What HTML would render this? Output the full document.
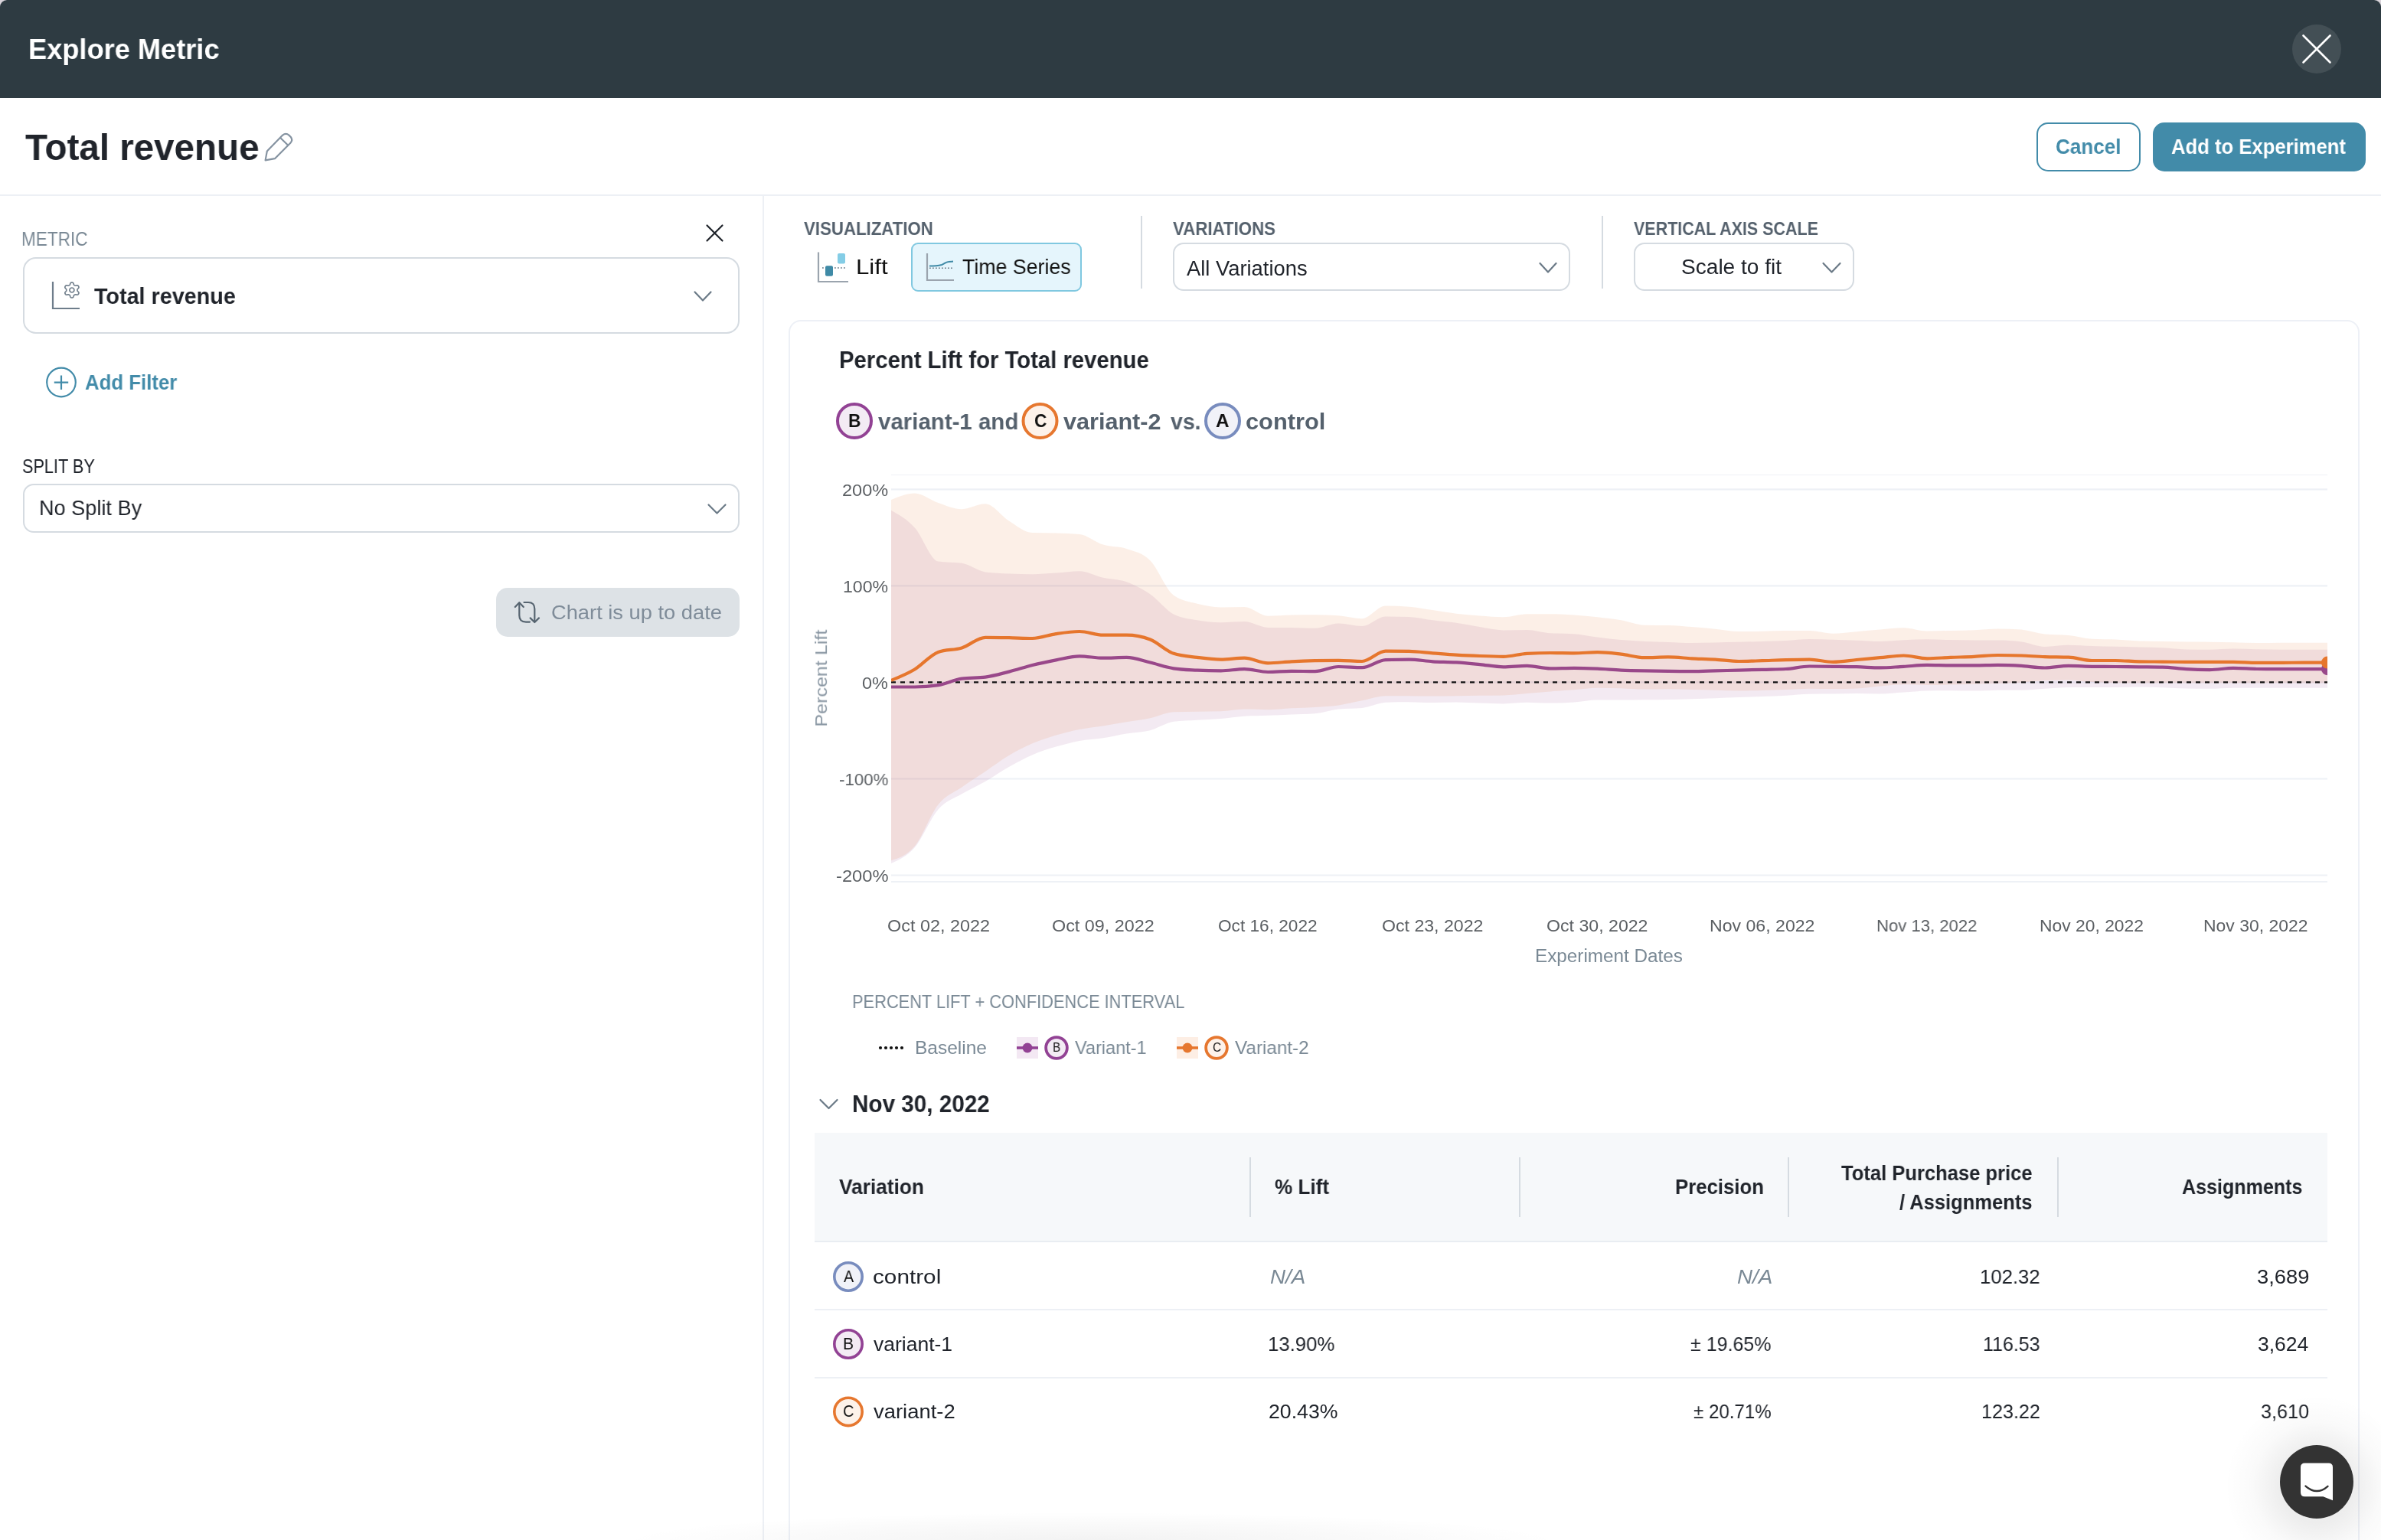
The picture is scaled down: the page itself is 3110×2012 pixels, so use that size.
<!DOCTYPE html>
<html><head><meta charset="utf-8"><title>Explore Metric</title>
<style>
html,body{margin:0;padding:0;}
html{background:#d9d3da;}
body{width:3110px;height:2012px;position:relative;overflow:hidden;font-family:"Liberation Sans",sans-serif;}
#app{position:absolute;left:0;top:0;width:3110px;height:2012px;background:#fff;border-radius:9px 9px 0 0;overflow:hidden;}
.abs{position:absolute;}
.t{position:absolute;white-space:pre;line-height:1;transform-origin:0 0;will-change:transform;}
#hdr{left:0;top:0;width:3110px;height:128px;background:#2e3b42;}
.box{position:absolute;box-sizing:border-box;border:2px solid #d5dbe1;background:#fff;}
</style></head>
<body><div id="app">
<div id="hdr" class="abs"></div>
<!-- buttons -->
<div class="box" style="left:2660px;top:160px;width:136px;height:64px;border:2.5px solid #428ba9;border-radius:15px;"></div>
<div class="abs" style="left:2812px;top:160px;width:278px;height:64px;background:#428ba9;border-radius:15px;"></div>
<!-- separators -->
<div class="abs" style="left:0;top:254px;width:3110px;height:2px;background:#edf0f5;"></div>
<div class="abs" style="left:996px;top:256px;width:2px;height:1760px;background:#edf0f5;"></div>
<!-- sidebar boxes -->
<div class="box" style="left:30px;top:336px;width:936px;height:100px;border-radius:17px;"></div>
<div class="box" style="left:30px;top:632px;width:936px;height:64px;border-radius:14px;"></div>
<div class="abs" style="left:648px;top:768px;width:318px;height:64px;background:#dde2e6;border-radius:15px;"></div>
<!-- toolbar -->
<div class="box" style="left:1190px;top:317px;width:223px;height:64px;border-color:#80c8e0;background:#e5f5fc;border-radius:9px;"></div>
<div class="abs" style="left:1490px;top:282px;width:2px;height:95px;background:#d5dbe1;"></div>
<div class="abs" style="left:2092px;top:282px;width:2px;height:95px;background:#d5dbe1;"></div>
<div class="box" style="left:1532px;top:317px;width:519px;height:63px;border-radius:14px;"></div>
<div class="box" style="left:2134px;top:317px;width:288px;height:63px;border-radius:14px;"></div>
<!-- card -->
<div class="box" style="left:1030px;top:418px;width:2052px;height:1700px;border-color:#edf0f6;border-radius:16px;"></div>
<!-- table -->
<div class="abs" style="left:1064px;top:1480px;width:1976px;height:142px;background:#f6f8fa;"></div>
<div class="abs" style="left:1064px;top:1621px;width:1976px;height:2px;background:#e9edf2;"></div>
<div class="abs" style="left:1064px;top:1710px;width:1976px;height:2px;background:#edf0f5;"></div>
<div class="abs" style="left:1064px;top:1798.5px;width:1976px;height:2px;background:#edf0f5;"></div>
<div class="abs" style="left:1632px;top:1512px;width:2px;height:78px;background:#d5dbe1;"></div>
<div class="abs" style="left:1984px;top:1512px;width:2px;height:78px;background:#d5dbe1;"></div>
<div class="abs" style="left:2335px;top:1512px;width:2px;height:78px;background:#d5dbe1;"></div>
<div class="abs" style="left:2687px;top:1512px;width:2px;height:78px;background:#d5dbe1;"></div>
<!-- bottom shadow -->
<div class="abs" style="left:800px;top:1975px;width:1250px;height:80px;border-radius:50%;background:radial-gradient(ellipse at center, rgba(0,0,0,0.05) 0%, rgba(0,0,0,0.02) 45%, rgba(0,0,0,0) 70%);"></div>
<svg class="abs" style="left:0;top:0" width="3110" height="2012" viewBox="0 0 3110 2012">
<defs><clipPath id="plot"><rect x="1164" y="600" width="1876" height="560"/></clipPath></defs>
<line x1="1164" x2="3040" y1="620.5" y2="620.5" stroke="#eef1f6" stroke-width="1.2"/>
<line x1="1164" x2="3040" y1="639.3" y2="639.3" stroke="#eef1f6" stroke-width="2.2"/>
<line x1="1164" x2="3040" y1="765.4" y2="765.4" stroke="#eef1f6" stroke-width="2.2"/>
<line x1="1164" x2="3040" y1="891.4" y2="891.4" stroke="#eef1f6" stroke-width="2.2"/>
<line x1="1164" x2="3040" y1="1017.5" y2="1017.5" stroke="#eef1f6" stroke-width="2.2"/>
<line x1="1164" x2="3040" y1="1143.5" y2="1143.5" stroke="#eef1f6" stroke-width="2.2"/>
<line x1="1164" x2="3040" y1="1152.0" y2="1152.0" stroke="#eef1f6" stroke-width="2.2"/>
<g clip-path="url(#plot)">
<path d="M1164.0,666.8C1174.3,672.5 1184.5,678.3 1194.8,689.4C1205.0,700.5 1215.3,731.9 1225.5,733.4C1235.8,735.0 1246.0,734.2 1256.3,735.8C1266.5,737.3 1276.8,746.1 1287.0,747.4C1297.3,748.7 1307.5,748.9 1317.8,749.4C1328.0,749.8 1338.3,750.2 1348.5,750.2C1358.8,750.2 1369.0,749.3 1379.3,748.6C1389.5,748.0 1399.8,746.3 1410.0,746.3C1420.3,746.3 1430.5,752.5 1440.8,754.8C1451.0,757.2 1461.3,756.7 1471.5,760.3C1481.8,763.9 1492.0,769.3 1502.3,776.3C1512.5,783.3 1522.8,797.2 1533.0,802.4C1543.3,807.6 1553.6,808.4 1563.8,810.2C1574.1,812.0 1584.3,813.3 1594.6,813.3C1604.8,813.3 1615.1,812.1 1625.3,812.1C1635.6,812.1 1645.8,819.9 1656.1,819.9C1666.3,819.9 1676.6,819.9 1686.8,819.9C1697.1,819.9 1707.3,820.7 1717.6,820.7C1727.8,820.7 1738.1,814.5 1748.3,814.5C1758.6,814.5 1768.8,818.0 1779.1,818.0C1789.3,818.0 1799.6,805.4 1809.8,805.4C1820.1,805.4 1830.3,805.6 1840.6,805.9C1850.8,806.2 1861.1,809.0 1871.3,810.3C1881.6,811.6 1891.8,812.3 1902.1,813.8C1912.3,815.2 1922.6,817.5 1932.9,819.1C1943.1,820.8 1953.4,823.4 1963.6,823.4C1973.9,823.4 1984.1,822.9 1994.4,822.9C2004.6,822.9 2014.9,826.5 2025.1,827.2C2035.4,827.9 2045.6,827.6 2055.9,828.3C2066.1,829.0 2076.4,831.3 2086.6,832.6C2096.9,833.9 2107.1,835.2 2117.4,836.1C2127.6,837.0 2137.9,837.5 2148.1,838.0C2158.4,838.4 2168.6,838.7 2178.9,839.0C2189.1,839.4 2199.4,840.1 2209.6,840.1C2219.9,840.1 2230.1,839.8 2240.4,839.6C2250.6,839.3 2260.9,839.0 2271.1,838.8C2281.4,838.5 2291.7,838.3 2301.9,838.0C2312.2,837.6 2322.4,837.4 2332.7,836.9C2342.9,836.4 2353.2,835.0 2363.4,835.0C2373.7,835.0 2383.9,835.5 2394.2,835.8C2404.4,836.1 2414.7,836.4 2424.9,836.7C2435.2,837.1 2445.4,838.0 2455.7,838.0C2465.9,838.0 2476.2,836.8 2486.4,836.3C2496.7,835.9 2506.9,835.3 2517.2,835.3C2527.4,835.3 2537.7,835.9 2547.9,836.1C2558.2,836.3 2568.4,836.6 2578.7,836.6C2588.9,836.6 2599.2,836.6 2609.4,836.6C2619.7,836.6 2629.9,837.2 2640.2,838.5C2650.4,839.7 2660.7,844.9 2671.0,844.9C2681.2,844.9 2691.5,842.8 2701.7,842.8C2712.0,842.8 2722.2,843.8 2732.5,844.1C2742.7,844.5 2753.0,844.5 2763.2,844.7C2773.5,844.9 2783.7,845.2 2794.0,845.5C2804.2,845.8 2814.5,845.8 2824.7,846.3C2835.0,846.8 2845.2,848.3 2855.5,848.4C2865.7,848.6 2876.0,848.7 2886.2,848.7C2896.5,848.7 2906.7,847.6 2917.0,847.6C2927.2,847.6 2937.5,848.0 2947.7,848.2C2958.0,848.4 2968.2,848.7 2978.5,848.7C2988.7,848.7 2999.0,848.7 3009.2,848.7C3019.5,848.7 3029.7,848.7 3040.0,848.7L3040.0,898.7C3029.7,898.7 3019.5,898.7 3009.2,898.7C2999.0,898.7 2988.7,898.7 2978.5,898.7C2968.2,898.7 2958.0,898.7 2947.7,898.7C2937.5,898.7 2927.2,898.7 2917.0,898.7C2906.7,898.7 2896.5,899.8 2886.2,899.8C2876.0,899.8 2865.7,899.7 2855.5,899.5C2845.2,899.3 2835.0,898.5 2824.7,898.2C2814.5,897.9 2804.2,897.6 2794.0,897.6C2783.7,897.6 2773.5,897.9 2763.2,897.9C2753.0,897.9 2742.7,897.9 2732.5,897.9C2722.2,897.9 2712.0,897.9 2701.7,897.9C2691.5,897.9 2681.2,899.2 2671.0,899.8C2660.7,900.4 2650.4,901.7 2640.2,901.7C2629.9,901.7 2619.7,901.7 2609.4,901.7C2599.2,901.7 2588.9,902.5 2578.7,902.5C2568.4,902.5 2558.2,902.2 2547.9,902.2C2537.7,902.2 2527.4,902.3 2517.2,902.5C2506.9,902.7 2496.7,904.0 2486.4,904.6C2476.2,905.3 2465.9,906.5 2455.7,906.5C2445.4,906.5 2435.2,906.0 2424.9,906.0C2414.7,906.0 2404.4,906.4 2394.2,906.5C2383.9,906.6 2373.7,906.6 2363.4,906.8C2353.2,907.0 2342.9,908.1 2332.7,908.7C2322.4,909.2 2312.2,909.6 2301.9,910.0C2291.7,910.4 2281.4,910.7 2271.1,911.1C2260.9,911.4 2250.6,911.8 2240.4,912.2C2230.1,912.5 2219.9,912.9 2209.6,913.2C2199.4,913.5 2189.1,913.9 2178.9,914.0C2168.6,914.2 2158.4,914.2 2148.1,914.3C2137.9,914.4 2127.6,914.6 2117.4,914.6C2107.1,914.6 2096.9,914.6 2086.6,914.6C2076.4,914.6 2066.1,916.9 2055.9,917.5C2045.6,918.2 2035.4,918.6 2025.1,918.6C2014.9,918.6 2004.6,917.8 1994.4,917.8C1984.1,917.8 1973.9,919.4 1963.6,919.4C1953.4,919.4 1943.1,918.9 1932.9,918.6C1922.6,918.3 1912.3,917.5 1902.1,917.5C1891.8,917.5 1881.6,918.1 1871.3,918.1C1861.1,918.1 1850.8,917.3 1840.6,917.3C1830.3,917.3 1820.1,917.4 1809.8,917.8C1799.6,918.2 1789.3,924.0 1779.1,925.0C1768.8,926.0 1758.6,925.5 1748.3,926.5C1738.1,927.4 1727.8,931.4 1717.6,932.3C1707.3,933.1 1697.1,933.1 1686.8,933.5C1676.6,933.9 1666.3,934.4 1656.1,934.8C1645.8,935.2 1635.6,935.1 1625.3,935.8C1615.1,936.5 1604.8,938.2 1594.6,939.1C1584.3,939.9 1574.1,940.2 1563.8,940.8C1553.6,941.5 1543.3,941.5 1533.0,942.8C1522.8,944.2 1512.5,951.6 1502.3,954.2C1492.0,956.8 1481.8,956.8 1471.5,958.5C1461.3,960.1 1451.0,962.7 1440.8,964.3C1430.5,965.9 1420.3,966.2 1410.0,968.0C1399.8,969.9 1389.5,972.6 1379.3,975.6C1369.0,978.6 1358.8,981.8 1348.5,986.2C1338.3,990.6 1328.0,996.3 1317.8,1002.1C1307.5,1007.9 1297.3,1015.1 1287.0,1021.0C1276.8,1026.8 1266.5,1031.3 1256.3,1037.3C1246.0,1043.4 1235.8,1045.9 1225.5,1057.5C1215.3,1069.1 1205.0,1095.4 1194.8,1107.2C1184.5,1118.9 1174.3,1123.4 1164.0,1127.9Z" fill="#99488a" fill-opacity="0.112"/>
<path d="M1164.0,653.1C1174.3,648.8 1184.5,644.6 1194.8,644.6C1205.0,644.6 1215.3,653.6 1225.5,657.0C1235.8,660.5 1246.0,665.2 1256.3,665.2C1266.5,665.2 1276.8,658.2 1287.0,658.2C1297.3,658.2 1307.5,674.1 1317.8,680.4C1328.0,686.7 1338.3,695.7 1348.5,696.0C1358.8,696.3 1369.0,696.1 1379.3,696.4C1389.5,696.7 1399.8,696.9 1410.0,698.0C1420.3,699.0 1430.5,708.4 1440.8,711.6C1451.0,714.8 1461.3,713.6 1471.5,717.0C1481.8,720.5 1492.0,722.1 1502.3,732.2C1512.5,742.4 1522.8,770.6 1533.0,777.8C1543.3,785.1 1553.6,786.2 1563.8,788.8C1574.1,791.4 1584.3,793.4 1594.6,793.4C1604.8,793.4 1615.1,793.0 1625.3,793.0C1635.6,793.0 1645.8,804.7 1656.1,804.7C1666.3,804.7 1676.6,803.8 1686.8,803.6C1697.1,803.3 1707.3,803.2 1717.6,803.2C1727.8,803.2 1738.1,803.6 1748.3,804.3C1758.6,805.1 1768.8,808.2 1779.1,808.2C1789.3,808.2 1799.6,791.6 1809.8,791.6C1820.1,791.6 1830.3,792.0 1840.6,792.7C1850.8,793.5 1861.1,795.6 1871.3,797.1C1881.6,798.6 1891.8,800.5 1902.1,801.7C1912.3,802.9 1922.6,803.6 1932.9,804.4C1943.1,805.1 1953.4,806.2 1963.6,806.2C1973.9,806.2 1984.1,802.2 1994.4,802.2C2004.6,802.2 2014.9,802.2 2025.1,802.2C2035.4,802.2 2045.6,802.9 2055.9,803.5C2066.1,804.2 2076.4,805.1 2086.6,806.2C2096.9,807.4 2107.1,808.5 2117.4,810.3C2127.6,812.0 2137.9,816.5 2148.1,816.7C2158.4,816.9 2168.6,816.8 2178.9,817.0C2189.1,817.2 2199.4,818.3 2209.6,819.1C2219.9,819.9 2230.1,820.8 2240.4,821.8C2250.6,822.8 2260.9,825.1 2271.1,825.1C2281.4,825.1 2291.7,825.0 2301.9,824.8C2312.2,824.6 2322.4,824.0 2332.7,824.0C2342.9,824.0 2353.2,824.0 2363.4,824.0C2373.7,824.0 2383.9,827.7 2394.2,827.7C2404.4,827.7 2414.7,826.1 2424.9,825.2C2435.2,824.3 2445.4,823.2 2455.7,822.4C2465.9,821.5 2476.2,820.2 2486.4,820.2C2496.7,820.2 2506.9,824.5 2517.2,824.5C2527.4,824.5 2537.7,824.2 2547.9,824.0C2558.2,823.8 2568.4,823.6 2578.7,823.2C2588.9,822.8 2599.2,821.6 2609.4,821.6C2619.7,821.6 2629.9,821.9 2640.2,822.6C2650.4,823.4 2660.7,827.7 2671.0,828.5C2681.2,829.4 2691.5,829.0 2701.7,829.9C2712.0,830.8 2722.2,834.2 2732.5,834.7C2742.7,835.3 2753.0,835.1 2763.2,835.5C2773.5,836.0 2783.7,837.1 2794.0,837.4C2804.2,837.8 2814.5,837.8 2824.7,838.0C2835.0,838.1 2845.2,838.4 2855.5,838.5C2865.7,838.6 2876.0,838.6 2886.2,838.8C2896.5,838.9 2906.7,839.1 2917.0,839.3C2927.2,839.5 2937.5,840.1 2947.7,840.1C2958.0,840.1 2968.2,839.8 2978.5,839.8C2988.7,839.8 2999.0,839.8 3009.2,839.8C3019.5,839.8 3029.7,839.8 3040.0,839.8L3040.0,892.2C3029.7,892.2 3019.5,892.2 3009.2,892.2C2999.0,892.2 2988.7,892.2 2978.5,892.2C2968.2,892.2 2958.0,892.2 2947.7,892.2C2937.5,892.2 2927.2,892.2 2917.0,892.2C2906.7,892.2 2896.5,892.2 2886.2,892.2C2876.0,892.2 2865.7,892.2 2855.5,892.2C2845.2,892.2 2835.0,892.2 2824.7,892.2C2814.5,892.2 2804.2,892.2 2794.0,892.2C2783.7,892.2 2773.5,892.2 2763.2,892.2C2753.0,892.2 2742.7,891.7 2732.5,891.1C2722.2,890.5 2712.0,888.4 2701.7,888.4C2691.5,888.4 2681.2,888.6 2671.0,889.1C2660.7,889.6 2650.4,891.1 2640.2,891.8C2629.9,892.5 2619.7,892.8 2609.4,893.1C2599.2,893.4 2588.9,893.5 2578.7,893.8C2568.4,894.0 2558.2,894.4 2547.9,894.6C2537.7,894.8 2527.4,894.9 2517.2,894.9C2506.9,894.9 2496.7,894.2 2486.4,894.2C2476.2,894.2 2465.9,895.6 2455.7,896.5C2445.4,897.4 2435.2,899.1 2424.9,899.5C2414.7,899.9 2404.4,900.1 2394.2,900.1C2383.9,900.1 2373.7,899.8 2363.4,899.8C2353.2,899.8 2342.9,900.8 2332.7,901.1C2322.4,901.5 2312.2,901.7 2301.9,901.9C2291.7,902.2 2281.4,902.5 2271.1,902.5C2260.9,902.5 2250.6,901.9 2240.4,901.7C2230.1,901.4 2219.9,901.4 2209.6,901.1C2199.4,900.9 2189.1,900.3 2178.9,900.3C2168.6,900.3 2158.4,900.6 2148.1,900.6C2137.9,900.6 2127.6,899.6 2117.4,899.2C2107.1,898.9 2096.9,898.7 2086.6,898.7C2076.4,898.7 2066.1,900.5 2055.9,901.3C2045.6,902.1 2035.4,902.6 2025.1,903.4C2014.9,904.2 2004.6,905.1 1994.4,906.0C1984.1,906.8 1973.9,908.2 1963.6,908.4C1953.4,908.6 1943.1,908.5 1932.9,908.7C1922.6,908.8 1912.3,909.1 1902.1,909.2C1891.8,909.3 1881.6,909.5 1871.3,909.5C1861.1,909.5 1850.8,909.2 1840.6,909.2C1830.3,909.2 1820.1,909.2 1809.8,909.2C1799.6,909.2 1789.3,913.3 1779.1,915.3C1768.8,917.3 1758.6,920.0 1748.3,921.4C1738.1,922.9 1727.8,923.3 1717.6,923.9C1707.3,924.6 1697.1,924.7 1686.8,925.2C1676.6,925.7 1666.3,927.2 1656.1,927.2C1645.8,927.2 1635.6,926.5 1625.3,926.5C1615.1,926.5 1604.8,928.9 1594.6,929.2C1584.3,929.6 1574.1,929.6 1563.8,929.7C1553.6,929.9 1543.3,929.9 1533.0,930.2C1522.8,930.6 1512.5,936.1 1502.3,938.3C1492.0,940.5 1481.8,941.7 1471.5,943.3C1461.3,945.0 1451.0,946.8 1440.8,948.4C1430.5,950.0 1420.3,950.9 1410.0,952.9C1399.8,954.9 1389.5,957.4 1379.3,960.5C1369.0,963.6 1358.8,966.9 1348.5,971.3C1338.3,975.7 1328.0,980.9 1317.8,986.9C1307.5,993.0 1297.3,1000.9 1287.0,1007.9C1276.8,1014.8 1266.5,1021.3 1256.3,1028.5C1246.0,1035.8 1235.8,1038.4 1225.5,1051.2C1215.3,1064.0 1205.0,1093.2 1194.8,1105.4C1184.5,1117.6 1174.3,1120.9 1164.0,1124.3Z" fill="#e6762d" fill-opacity="0.112"/>
<line x1="1164" x2="3040" y1="891.4" y2="891.4" stroke="#111" stroke-width="2.1" stroke-dasharray="6 6"/>
<path d="M1164.0,897.5C1174.3,897.5 1184.5,897.5 1194.8,897.5C1205.0,897.5 1215.3,896.7 1225.5,895.1C1235.8,893.6 1246.0,887.9 1256.3,886.6C1266.5,885.3 1276.8,885.9 1287.0,884.6C1297.3,883.3 1307.5,880.2 1317.8,877.6C1328.0,875.0 1338.3,871.6 1348.5,869.0C1358.8,866.5 1369.0,864.4 1379.3,862.4C1389.5,860.5 1399.8,857.3 1410.0,857.3C1420.3,857.3 1430.5,859.7 1440.8,859.7C1451.0,859.7 1461.3,858.9 1471.5,858.9C1481.8,858.9 1492.0,863.1 1502.3,865.5C1512.5,867.9 1522.8,871.8 1533.0,873.3C1543.3,874.9 1553.6,875.1 1563.8,875.7C1574.1,876.2 1584.3,876.4 1594.6,876.4C1604.8,876.4 1615.1,874.1 1625.3,874.1C1635.6,874.1 1645.8,878.0 1656.1,878.0C1666.3,878.0 1676.6,876.8 1686.8,876.8C1697.1,876.8 1707.3,877.2 1717.6,877.2C1727.8,877.2 1738.1,871.0 1748.3,871.0C1758.6,871.0 1768.8,872.2 1779.1,872.2C1789.3,872.2 1799.6,862.4 1809.8,862.1C1820.1,861.8 1830.3,861.6 1840.6,861.6C1850.8,861.6 1861.1,863.7 1871.3,864.3C1881.6,864.9 1891.8,864.7 1902.1,865.4C1912.3,866.0 1922.6,867.1 1932.9,868.1C1943.1,869.1 1953.4,871.3 1963.6,871.3C1973.9,871.3 1984.1,869.9 1994.4,869.9C2004.6,869.9 2014.9,873.4 2025.1,873.4C2035.4,873.4 2045.6,872.9 2055.9,872.9C2066.1,872.9 2076.4,873.3 2086.6,873.7C2096.9,874.2 2107.1,875.1 2117.4,875.6C2127.6,876.0 2137.9,876.2 2148.1,876.4C2158.4,876.6 2168.6,876.8 2178.9,876.9C2189.1,877.1 2199.4,877.2 2209.6,877.2C2219.9,877.2 2230.1,876.7 2240.4,876.4C2250.6,876.1 2260.9,875.9 2271.1,875.6C2281.4,875.3 2291.7,875.1 2301.9,874.8C2312.2,874.5 2322.4,874.5 2332.7,874.0C2342.9,873.4 2353.2,870.5 2363.4,870.5C2373.7,870.5 2383.9,870.6 2394.2,870.8C2404.4,870.9 2414.7,870.9 2424.9,871.2C2435.2,871.4 2445.4,872.4 2455.7,872.4C2465.9,872.4 2476.2,871.3 2486.4,870.8C2496.7,870.2 2506.9,868.9 2517.2,868.9C2527.4,868.9 2537.7,869.4 2547.9,869.4C2558.2,869.4 2568.4,869.4 2578.7,869.4C2588.9,869.4 2599.2,868.9 2609.4,868.9C2619.7,868.9 2629.9,869.3 2640.2,869.9C2650.4,870.6 2660.7,872.5 2671.0,872.5C2681.2,872.5 2691.5,869.9 2701.7,869.9C2712.0,869.9 2722.2,870.6 2732.5,870.8C2742.7,870.9 2753.0,870.9 2763.2,871.0C2773.5,871.1 2783.7,871.2 2794.0,871.3C2804.2,871.4 2814.5,871.4 2824.7,871.6C2835.0,871.7 2845.2,873.7 2855.5,874.2C2865.7,874.8 2876.0,875.1 2886.2,875.1C2896.5,875.1 2906.7,872.9 2917.0,872.9C2927.2,872.9 2937.5,873.8 2947.7,874.0C2958.0,874.2 2968.2,874.2 2978.5,874.2C2988.7,874.2 2999.0,874.2 3009.2,874.2C3019.5,874.2 3029.7,874.2 3040.0,874.2" fill="none" stroke="#99488a" stroke-width="4.2" stroke-linejoin="round"/>
<path d="M1164.0,888.9C1174.3,884.8 1184.5,880.7 1194.8,874.5C1205.0,868.3 1215.3,855.5 1225.5,851.9C1235.8,848.2 1246.0,849.6 1256.3,846.4C1266.5,843.2 1276.8,832.8 1287.0,832.8C1297.3,832.8 1307.5,833.0 1317.8,833.2C1328.0,833.4 1338.3,834.0 1348.5,834.0C1358.8,834.0 1369.0,829.6 1379.3,828.1C1389.5,826.6 1399.8,825.0 1410.0,825.0C1420.3,825.0 1430.5,829.7 1440.8,829.7C1451.0,829.7 1461.3,829.7 1471.5,829.7C1481.8,829.7 1492.0,831.6 1502.3,835.5C1512.5,839.4 1522.8,850.5 1533.0,853.8C1543.3,857.2 1553.6,857.6 1563.8,858.9C1574.1,860.2 1584.3,861.6 1594.6,861.6C1604.8,861.6 1615.1,859.7 1625.3,859.7C1635.6,859.7 1645.8,866.3 1656.1,866.3C1666.3,866.3 1676.6,864.9 1686.8,864.4C1697.1,863.8 1707.3,863.4 1717.6,863.2C1727.8,862.9 1738.1,862.8 1748.3,862.8C1758.6,862.8 1768.8,864.0 1779.1,864.0C1789.3,864.0 1799.6,850.6 1809.8,850.6C1820.1,850.6 1830.3,850.7 1840.6,850.9C1850.8,851.1 1861.1,852.5 1871.3,853.3C1881.6,854.1 1891.8,855.1 1902.1,855.7C1912.3,856.3 1922.6,856.7 1932.9,857.0C1943.1,857.4 1953.4,857.8 1963.6,857.8C1973.9,857.8 1984.1,854.4 1994.4,853.8C2004.6,853.3 2014.9,853.0 2025.1,853.0C2035.4,853.0 2045.6,853.3 2055.9,853.3C2066.1,853.3 2076.4,852.2 2086.6,852.2C2096.9,852.2 2107.1,853.5 2117.4,854.6C2127.6,855.8 2137.9,859.2 2148.1,859.2C2158.4,859.2 2168.6,858.4 2178.9,858.4C2189.1,858.4 2199.4,859.7 2209.6,860.3C2219.9,860.8 2230.1,861.0 2240.4,861.6C2250.6,862.2 2260.9,864.0 2271.1,864.0C2281.4,864.0 2291.7,863.5 2301.9,863.2C2312.2,862.9 2322.4,862.4 2332.7,862.2C2342.9,861.9 2353.2,861.6 2363.4,861.6C2373.7,861.6 2383.9,864.8 2394.2,864.8C2404.4,864.8 2414.7,863.0 2424.9,862.0C2435.2,861.1 2445.4,860.1 2455.7,859.2C2465.9,858.3 2476.2,856.5 2486.4,856.5C2496.7,856.5 2506.9,860.3 2517.2,860.3C2527.4,860.3 2537.7,859.3 2547.9,858.9C2558.2,858.5 2568.4,858.3 2578.7,857.8C2588.9,857.4 2599.2,856.0 2609.4,856.0C2619.7,856.0 2629.9,856.1 2640.2,856.5C2650.4,856.9 2660.7,857.8 2671.0,858.1C2681.2,858.5 2691.5,858.3 2701.7,858.7C2712.0,859.0 2722.2,863.0 2732.5,863.0C2742.7,863.0 2753.0,863.0 2763.2,863.0C2773.5,863.0 2783.7,864.1 2794.0,864.3C2804.2,864.5 2814.5,864.5 2824.7,864.6C2835.0,864.7 2845.2,864.8 2855.5,864.8C2865.7,864.8 2876.0,864.8 2886.2,864.8C2896.5,864.8 2906.7,864.8 2917.0,864.8C2927.2,864.8 2937.5,865.9 2947.7,865.9C2958.0,865.9 2968.2,865.9 2978.5,865.9C2988.7,865.9 2999.0,865.6 3009.2,865.6C3019.5,865.6 3029.7,865.6 3040.0,865.6" fill="none" stroke="#e6762d" stroke-width="4.2" stroke-linejoin="round"/>
<circle cx="3040" cy="874.2" r="8" fill="#99488a"/>
<circle cx="3040" cy="865.6" r="8" fill="#e6762d"/>
</g>
</svg>
<svg class="abs" style="left:0;top:0" width="3110" height="2012" viewBox="0 0 3110 2012" fill="none">
<!-- header close -->
<circle cx="3026" cy="64" r="32" fill="#434f55"/>
<path d="M3008.5,46.5L3043.5,81.5M3043.5,46.5L3008.5,81.5" stroke="#fff" stroke-width="2.6" stroke-linecap="round"/>
<!-- pencil -->
<g stroke="#8593a1" stroke-width="2.2" stroke-linejoin="round" stroke-linecap="round">
<path d="M346.6,209.4L348.8,197.6L369.2,176.6Q373.4,173 377.4,176.6L379.6,178.8Q383,182.8 379.4,186.8L359,207.2Z"/>
<path d="M366.4,180.2L376.2,189.8"/>
</g>
<!-- sidebar X -->
<path d="M923.5,294.5L943.5,314.5M943.5,294.5L923.5,314.5" stroke="#20242b" stroke-width="2.2" stroke-linecap="round"/>
<!-- metric icon -->
<path d="M69,368V403H104" stroke="#6e7d8b" stroke-width="2.2"/>
<g transform="translate(93.9,379)" stroke="#74828f" stroke-width="1.7" stroke-linejoin="round">
<path id="gear" d="M7.10,-0.00L7.12,-0.47L7.21,-0.95L7.54,-1.50L8.26,-2.21L8.91,-3.02L9.08,-3.76L8.94,-4.41L8.66,-5.00L8.29,-5.54L7.80,-5.98L7.07,-6.20L6.05,-6.05L5.07,-5.78L4.43,-5.77L3.96,-5.93L3.55,-6.15L3.15,-6.40L2.78,-6.72L2.47,-7.28L2.21,-8.26L1.84,-9.23L1.28,-9.74L0.65,-9.95L0.00,-10.00L-0.65,-9.95L-1.28,-9.74L-1.84,-9.23L-2.21,-8.26L-2.47,-7.28L-2.78,-6.72L-3.15,-6.40L-3.55,-6.15L-3.96,-5.93L-4.43,-5.77L-5.07,-5.78L-6.05,-6.05L-7.07,-6.20L-7.80,-5.98L-8.29,-5.54L-8.66,-5.00L-8.94,-4.41L-9.08,-3.76L-8.91,-3.02L-8.26,-2.21L-7.54,-1.50L-7.21,-0.95L-7.12,-0.47L-7.10,-0.00L-7.12,0.47L-7.21,0.95L-7.54,1.50L-8.26,2.21L-8.91,3.02L-9.08,3.76L-8.94,4.41L-8.66,5.00L-8.29,5.54L-7.80,5.98L-7.07,6.20L-6.05,6.05L-5.07,5.78L-4.43,5.77L-3.96,5.93L-3.55,6.15L-3.15,6.40L-2.78,6.72L-2.47,7.28L-2.21,8.26L-1.84,9.23L-1.28,9.74L-0.65,9.95L-0.00,10.00L0.65,9.95L1.28,9.74L1.84,9.23L2.21,8.26L2.47,7.28L2.78,6.72L3.15,6.40L3.55,6.15L3.96,5.93L4.43,5.77L5.07,5.78L6.05,6.05L7.07,6.20L7.80,5.98L8.29,5.54L8.66,5.00L8.94,4.41L9.08,3.76L8.91,3.02L8.26,2.21L7.54,1.50L7.21,0.95L7.12,0.47Z"/>
<circle r="3"/>
</g>
<!-- chevrons -->
<g stroke="#6b7a87" stroke-width="2.2" stroke-linecap="round" stroke-linejoin="round">
<path d="M907.5,381.5L918,392.5L928.5,381.5"/>
<path d="M925.5,659.5L936.5,670.5L947.5,659.5"/>
<path d="M2011.5,344L2022,355.5L2032.5,344"/>
<path d="M2381.5,344L2392.5,355.5L2403.5,344"/>
<path d="M1071.5,1437L1082.5,1448L1093.5,1437"/>
</g>
<!-- add filter -->
<circle cx="80" cy="499.5" r="18.8" stroke="#428ba9" stroke-width="2.2"/>
<path d="M70.8,499.7H89.2M80,490.5V509" stroke="#428ba9" stroke-width="2.2"/>
<!-- refresh icon -->
<g stroke="#566470" stroke-width="2.2" stroke-linecap="round" stroke-linejoin="round">
<path d="M678.3,788V804Q678.3,812.6 687,812.6H692"/>
<path d="M672.8,793L678.3,787.2L683.8,793"/>
<path d="M684.5,787H690Q698.3,787 698.3,795.5V812"/>
<path d="M692.6,807.4L698.3,813L704,807.4"/>
</g>
<!-- lift icon -->
<path d="M1069,329.5V368H1108" stroke="#9ba4ae" stroke-width="2.2"/>
<rect x="1094" y="331" width="10" height="13.5" rx="2" fill="#84cde6"/>
<path d="M1074,350H1104" stroke="#6a7a86" stroke-width="1.6" stroke-dasharray="1.8 2.2"/>
<rect x="1078" y="347.3" width="10" height="13.4" rx="2" fill="#3f8aa6"/>
<!-- time series icon -->
<path d="M1211,331V366H1246" stroke="#9ba4ae" stroke-width="2.2"/>
<path d="M1214,347.6C1222,347.6 1226,347 1230,346C1234,344.6 1235,342.2 1239,341.9C1242,341.6 1243,341.7 1245,341.6" stroke="#3f8aa6" stroke-width="2"/>
<path d="M1214,350.2H1244.5" stroke="#6a7a86" stroke-width="1.6" stroke-dasharray="1.8 2.2"/>
<!-- variant circles -->
<circle cx="1116" cy="550" r="22" fill="#f3ebf4" stroke="#924294" stroke-width="4"/>
<circle cx="1358.5" cy="550" r="22" fill="#fdf2ea" stroke="#e6772f" stroke-width="4"/>
<circle cx="1597" cy="550" r="22" fill="#f1f2f8" stroke="#788cbe" stroke-width="4"/>
<!-- legend -->
<g fill="#111"><circle cx="1150" cy="1369" r="2.1"/><circle cx="1157" cy="1369" r="2.1"/><circle cx="1164" cy="1369" r="2.1"/><circle cx="1171" cy="1369" r="2.1"/><circle cx="1178" cy="1369" r="2.1"/></g>
<rect x="1328" y="1355" width="28" height="28" fill="#f3e8f3"/>
<path d="M1328,1369H1356" stroke="#924294" stroke-width="3.6"/><circle cx="1342" cy="1369" r="6.5" fill="#924294"/>
<circle cx="1380" cy="1369" r="13.85" fill="#f3ebf4" stroke="#924294" stroke-width="3.8"/>
<rect x="1537" y="1355" width="28" height="28" fill="#fdeee4"/>
<path d="M1537,1369H1565" stroke="#e6772f" stroke-width="3.6"/><circle cx="1551" cy="1369" r="6.5" fill="#e6772f"/>
<circle cx="1589" cy="1369" r="13.85" fill="#fdf2ea" stroke="#e6772f" stroke-width="3.8"/>
<!-- table circles -->
<circle cx="1108" cy="1668" r="18.2" fill="#f1f2f8" stroke="#788cbe" stroke-width="3.6"/>
<circle cx="1108" cy="1756" r="18.2" fill="#f3ebf4" stroke="#924294" stroke-width="3.6"/>
<circle cx="1108" cy="1844.4" r="18.2" fill="#fdf2ea" stroke="#e6772f" stroke-width="3.6"/>
<!-- chat -->
<defs><radialGradient id="sh"><stop offset="0.4" stop-color="#000" stop-opacity="0.07"/><stop offset="0.7" stop-color="#000" stop-opacity="0.02"/><stop offset="1" stop-color="#000" stop-opacity="0"/></radialGradient></defs>
<circle cx="3026" cy="1942" r="120" fill="url(#sh)"/>
<circle cx="3026" cy="1936" r="48" fill="#333"/>
<path d="M3010.5,1911.5H3041.5Q3047,1911.5 3047,1917V1960.2L3034.4,1955.3H3010.5Q3005,1955.3 3005,1949.8V1917Q3005,1911.5 3010.5,1911.5Z" fill="#fff"/>
<path d="M3011.5,1941.6Q3026,1954.5 3040.5,1941.8" stroke="#333" stroke-width="2.4" stroke-linecap="round"/>
</svg>

<span class="t" style="left:37.0px;top:46.0px;font-size:37px;color:#ffffff;font-weight:700;transform:scaleX(0.9786);">Explore Metric</span>
<span class="t" style="left:33.3px;top:168.3px;font-size:49px;color:#20242b;font-weight:700;transform:scaleX(0.9702);">Total revenue</span>
<span class="t" style="left:2685.4px;top:179.0px;font-size:27px;color:#428ba9;font-weight:700;transform:scaleX(0.9651);">Cancel</span>
<span class="t" style="left:2836.1px;top:179.0px;font-size:27px;color:#ffffff;font-weight:700;transform:scaleX(0.9498);">Add to Experiment</span>
<span class="t" style="left:28.2px;top:299.6px;font-size:25px;color:#7a8995;transform:scaleX(0.9032);">METRIC</span>
<span class="t" style="left:122.5px;top:371.7px;font-size:30px;color:#20242b;font-weight:700;transform:scaleX(0.9583);">Total revenue</span>
<span class="t" style="left:110.7px;top:486.8px;font-size:27px;color:#428ba9;font-weight:700;transform:scaleX(0.9544);">Add Filter</span>
<span class="t" style="left:29.1px;top:597.0px;font-size:25px;color:#20242b;transform:scaleX(0.8667);">SPLIT BY</span>
<span class="t" style="left:50.6px;top:649.4px;font-size:28.5px;color:#20242b;transform:scaleX(0.9518);">No Split By</span>
<span class="t" style="left:719.7px;top:786.6px;font-size:26.5px;color:#7f8c99;transform:scaleX(1.0294);">Chart is up to date</span>
<span class="t" style="left:1050.4px;top:286.7px;font-size:24.5px;color:#55616d;font-weight:700;transform:scaleX(0.9076);">VISUALIZATION</span>
<span class="t" style="left:1117.5px;top:336.0px;font-size:27px;color:#111;transform:scaleX(1.1529);">Lift</span>
<span class="t" style="left:1257.0px;top:336.0px;font-size:27px;color:#111;transform:scaleX(0.9901);">Time Series</span>
<span class="t" style="left:1532.0px;top:286.7px;font-size:24.5px;color:#55616d;font-weight:700;transform:scaleX(0.9089);">VARIATIONS</span>
<span class="t" style="left:1550.0px;top:338.0px;font-size:27px;color:#20242b;transform:scaleX(1.0129);">All Variations</span>
<span class="t" style="left:2133.8px;top:286.7px;font-size:24.5px;color:#55616d;font-weight:700;transform:scaleX(0.8759);">VERTICAL AXIS SCALE</span>
<span class="t" style="left:2196.0px;top:336.2px;font-size:27px;color:#20242b;transform:scaleX(1.0400);">Scale to fit</span>
<span class="t" style="left:1095.5px;top:455.0px;font-size:30.5px;color:#20242b;font-weight:700;transform:scaleX(0.9604);">Percent Lift for Total revenue</span>
<span class="t" style="left:1146.5px;top:535.7px;font-size:30px;color:#55616d;font-weight:700;transform:scaleX(0.9816);">variant-1 and</span>
<span class="t" style="left:1389.3px;top:535.7px;font-size:30px;color:#55616d;font-weight:700;transform:scaleX(1.0194);">variant-2</span>
<span class="t" style="left:1529.0px;top:535.7px;font-size:30px;color:#55616d;font-weight:700;transform:scaleX(0.9500);">vs.</span>
<span class="t" style="left:1627.3px;top:535.7px;font-size:30px;color:#55616d;font-weight:700;transform:scaleX(1.0253);">control</span>
<span class="t" style="left:1107.7px;top:537.8px;font-size:24.5px;color:#111;font-weight:700;transform:scaleX(0.9267);">B</span>
<span class="t" style="left:1350.7px;top:537.8px;font-size:24.5px;color:#111;font-weight:700;transform:scaleX(0.9187);">C</span>
<span class="t" style="left:1587.9px;top:537.8px;font-size:24.5px;color:#111;font-weight:700;transform:scaleX(0.9875);">A</span>
<span class="t" style="left:1099.9px;top:629.6px;font-size:22.5px;color:#5b5f63;transform:scaleX(1.0446);">200%</span>
<span class="t" style="left:1100.8px;top:755.7px;font-size:22.5px;color:#5b5f63;transform:scaleX(1.0273);">100%</span>
<span class="t" style="left:1126.1px;top:881.7px;font-size:22.5px;color:#5b5f63;transform:scaleX(1.0419);">0%</span>
<span class="t" style="left:1096.0px;top:1007.8px;font-size:22.5px;color:#5b5f63;transform:scaleX(0.9905);">-100%</span>
<span class="t" style="left:1092.0px;top:1133.8px;font-size:22.5px;color:#5b5f63;transform:scaleX(1.0524);">-200%</span>
<span class="t" style="left:1014.0px;top:875.1px;font-size:22.5px;color:#8a97a3;transform:rotate(-90deg) scaleX(1.1161);transform-origin:58.0px 9.9px;">Percent Lift</span>
<span class="t" style="left:1158.5px;top:1198.6px;font-size:22.5px;color:#5b5f63;transform:scaleX(1.0394);">Oct 02, 2022</span>
<span class="t" style="left:1373.9px;top:1198.6px;font-size:22.5px;color:#5b5f63;transform:scaleX(1.0378);">Oct 09, 2022</span>
<span class="t" style="left:1591.2px;top:1198.6px;font-size:22.5px;color:#5b5f63;transform:scaleX(1.0063);">Oct 16, 2022</span>
<span class="t" style="left:1805.1px;top:1198.6px;font-size:22.5px;color:#5b5f63;transform:scaleX(1.0276);">Oct 23, 2022</span>
<span class="t" style="left:2020.4px;top:1198.6px;font-size:22.5px;color:#5b5f63;transform:scaleX(1.0283);">Oct 30, 2022</span>
<span class="t" style="left:2232.7px;top:1198.6px;font-size:22.5px;color:#5b5f63;transform:scaleX(1.0267);">Nov 06, 2022</span>
<span class="t" style="left:2451.0px;top:1198.6px;font-size:22.5px;color:#5b5f63;transform:scaleX(0.9824);">Nov 13, 2022</span>
<span class="t" style="left:2664.0px;top:1198.6px;font-size:22.5px;color:#5b5f63;transform:scaleX(1.0160);">Nov 20, 2022</span>
<span class="t" style="left:2877.5px;top:1198.6px;font-size:22.5px;color:#5b5f63;transform:scaleX(1.0191);">Nov 30, 2022</span>
<span class="t" style="left:2004.9px;top:1237.6px;font-size:23px;color:#7a8995;transform:scaleX(1.0556);">Experiment Dates</span>
<span class="t" style="left:1113.0px;top:1297.0px;font-size:24.5px;color:#7a8995;transform:scaleX(0.8907);">PERCENT LIFT + CONFIDENCE INTERVAL</span>
<span class="t" style="left:1194.7px;top:1357.0px;font-size:24.5px;color:#7a8995;">Baseline</span>
<span class="t" style="left:1404.0px;top:1357.0px;font-size:24.5px;color:#7a8995;transform:scaleX(0.9588);">Variant-1</span>
<span class="t" style="left:1612.6px;top:1357.0px;font-size:24.5px;color:#7a8995;transform:scaleX(0.9897);">Variant-2</span>
<span class="t" style="left:1375.2px;top:1360.0px;font-size:16.5px;color:#111;transform:scaleX(0.9278);">B</span>
<span class="t" style="left:1583.7px;top:1360.0px;font-size:16.5px;color:#111;transform:scaleX(0.9300);">C</span>
<span class="t" style="left:1112.9px;top:1426.5px;font-size:30.5px;color:#20242b;font-weight:700;transform:scaleX(0.9725);">Nov 30, 2022</span>
<span class="t" style="left:1095.7px;top:1538.0px;font-size:27px;color:#20242b;font-weight:700;transform:scaleX(0.9732);">Variation</span>
<span class="t" style="left:1665.4px;top:1538.0px;font-size:27px;color:#20242b;font-weight:700;transform:scaleX(0.9667);">% Lift</span>
<span class="t" style="left:2187.9px;top:1538.0px;font-size:27px;color:#20242b;font-weight:700;transform:scaleX(0.9542);">Precision</span>
<span class="t" style="left:2405.0px;top:1519.6px;font-size:27px;color:#20242b;font-weight:700;transform:scaleX(0.9468);">Total Purchase price</span>
<span class="t" style="left:2481.0px;top:1558.3px;font-size:27px;color:#20242b;font-weight:700;transform:scaleX(0.9454);">/ Assignments</span>
<span class="t" style="left:2850.1px;top:1538.0px;font-size:27px;color:#20242b;font-weight:700;transform:scaleX(0.9286);">Assignments</span>
<span class="t" style="left:1101.6px;top:1658.1px;font-size:21.4px;color:#111;transform:scaleX(0.9179);">A</span>
<span class="t" style="left:1139.5px;top:1655.0px;font-size:26.5px;color:#20242b;transform:scaleX(1.1221);">control</span>
<span class="t" style="left:1659.0px;top:1655.0px;font-size:26.5px;color:#7a8995;font-style:italic;transform:scaleX(1.0476);">N/A</span>
<span class="t" style="left:2268.6px;top:1655.0px;font-size:26.5px;color:#7a8995;font-style:italic;transform:scaleX(1.0476);">N/A</span>
<span class="t" style="left:2585.9px;top:1655.0px;font-size:26.5px;color:#20242b;transform:scaleX(0.9705);">102.32</span>
<span class="t" style="left:2948.0px;top:1655.0px;font-size:26.5px;color:#20242b;transform:scaleX(1.0312);">3,689</span>
<span class="t" style="left:1100.6px;top:1746.1px;font-size:21.4px;color:#111;transform:scaleX(0.9818);">B</span>
<span class="t" style="left:1140.6px;top:1743.0px;font-size:26.5px;color:#20242b;">variant-1</span>
<span class="t" style="left:1656.1px;top:1743.0px;font-size:26.5px;color:#20242b;transform:scaleX(0.9724);">13.90%</span>
<span class="t" style="left:2208.1px;top:1743.0px;font-size:26.5px;color:#20242b;transform:scaleX(0.9427);">± 19.65%</span>
<span class="t" style="left:2589.9px;top:1743.0px;font-size:26.5px;color:#20242b;transform:scaleX(0.9434);">116.53</span>
<span class="t" style="left:2949.0px;top:1743.0px;font-size:26.5px;color:#20242b;">3,624</span>
<span class="t" style="left:1101.0px;top:1834.1px;font-size:21.4px;color:#111;transform:scaleX(0.9385);">C</span>
<span class="t" style="left:1140.6px;top:1831.0px;font-size:26.5px;color:#20242b;transform:scaleX(1.0343);">variant-2</span>
<span class="t" style="left:1657.0px;top:1831.0px;font-size:26.5px;color:#20242b;transform:scaleX(1.0068);">20.43%</span>
<span class="t" style="left:2211.8px;top:1831.0px;font-size:26.5px;color:#20242b;transform:scaleX(0.9091);">± 20.71%</span>
<span class="t" style="left:2587.6px;top:1831.0px;font-size:26.5px;color:#20242b;transform:scaleX(0.9487);">123.22</span>
<span class="t" style="left:2953.0px;top:1831.0px;font-size:26.5px;color:#20242b;transform:scaleX(0.9531);">3,610</span>
</div></body></html>
